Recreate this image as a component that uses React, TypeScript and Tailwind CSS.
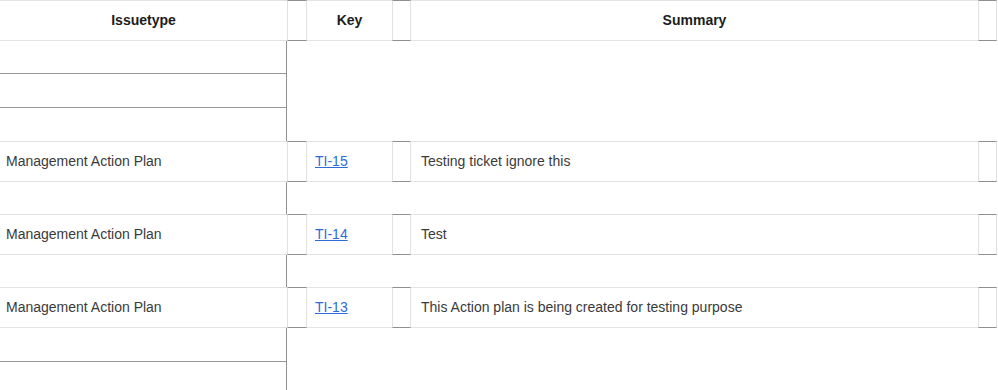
const rows = [
  { type: "Management Action Plan", key: "TI-15", summary: "Testing ticket ignore this" },
  { type: "Management Action Plan", key: "TI-14", summary: "Test" },
  { type: "Management Action Plan", key: "TI-13", summary: "This Action plan is being created for testing purpose" },
];

function Box() {
  return (
    <div className="h-full shrink-0 border-t border-b border-l border-r border-t-[#8f8f8f] border-b-[#8f8f8f] border-l-[#e2e2e2] border-r-[#e2e2e2]" />
  );
}

function Row({ children }: { children: React.ReactNode }) {
  return <div className="flex h-[41px] w-[997px]">{children}</div>;
}

function Cell({ className, children }: { className: string; children?: React.ReactNode }) {
  return (
    <div className={`flex h-full shrink-0 items-center border-t border-b border-t-[#e2e2e2] border-b-[#e2e2e2] ${className}`}>
      {children}
    </div>
  );
}

function Spacer({ lines, first }: { lines: number; first: number }) {
  return (
    <div className="flex w-[997px]">
      <div className="flex w-[286px] shrink-0 flex-col">
        <div style={{ height: first }} />
        {Array.from({ length: lines }).map((_, i) => (
          <div key={i} className="h-[34px] border-t border-t-[#999999]" />
        ))}
      </div>
      <div className="flex-1 border-l border-l-[#8f8f8f]" />
    </div>
  );
}

export default function App() {
  return (
    <div className="h-[390px] w-[998px] overflow-hidden bg-white font-['Liberation_Sans',Arial,sans-serif] text-[14px]">
      <Row>
        <Cell className="w-[287px] justify-center font-bold text-[#1c1c1c]">Issuetype</Cell>
        <div className="w-[20px]"><Box /></div>
        <Cell className="w-[85px] justify-center font-bold text-[#1c1c1c]">Key</Cell>
        <div className="w-[19px]"><Box /></div>
        <Cell className="w-[567px] justify-center font-bold text-[#1c1c1c]">Summary</Cell>
        <div className="w-[19px]"><Box /></div>
      </Row>

      <Spacer lines={2} first={32} />

      {rows.map((r, i) => (
        <div key={r.key}>
          <Row>
            <Cell className="w-[287px] pl-[6px] text-[#3a3a3a]">{r.type}</Cell>
            <div className="w-[20px]"><Box /></div>
            <Cell className="w-[85px] pl-[8px]">
              <a href="#" className="text-[#2f6bd6] underline">{r.key}</a>
            </Cell>
            <div className="w-[19px]"><Box /></div>
            <Cell className="w-[567px] pl-[10px] text-[#3a3a3a]">{r.summary}</Cell>
            <div className="w-[19px]"><Box /></div>
          </Row>
          {i < rows.length - 1 ? <Spacer lines={0} first={32} /> : <Spacer lines={2} first={33} />}
        </div>
      ))}
    </div>
  );
}
